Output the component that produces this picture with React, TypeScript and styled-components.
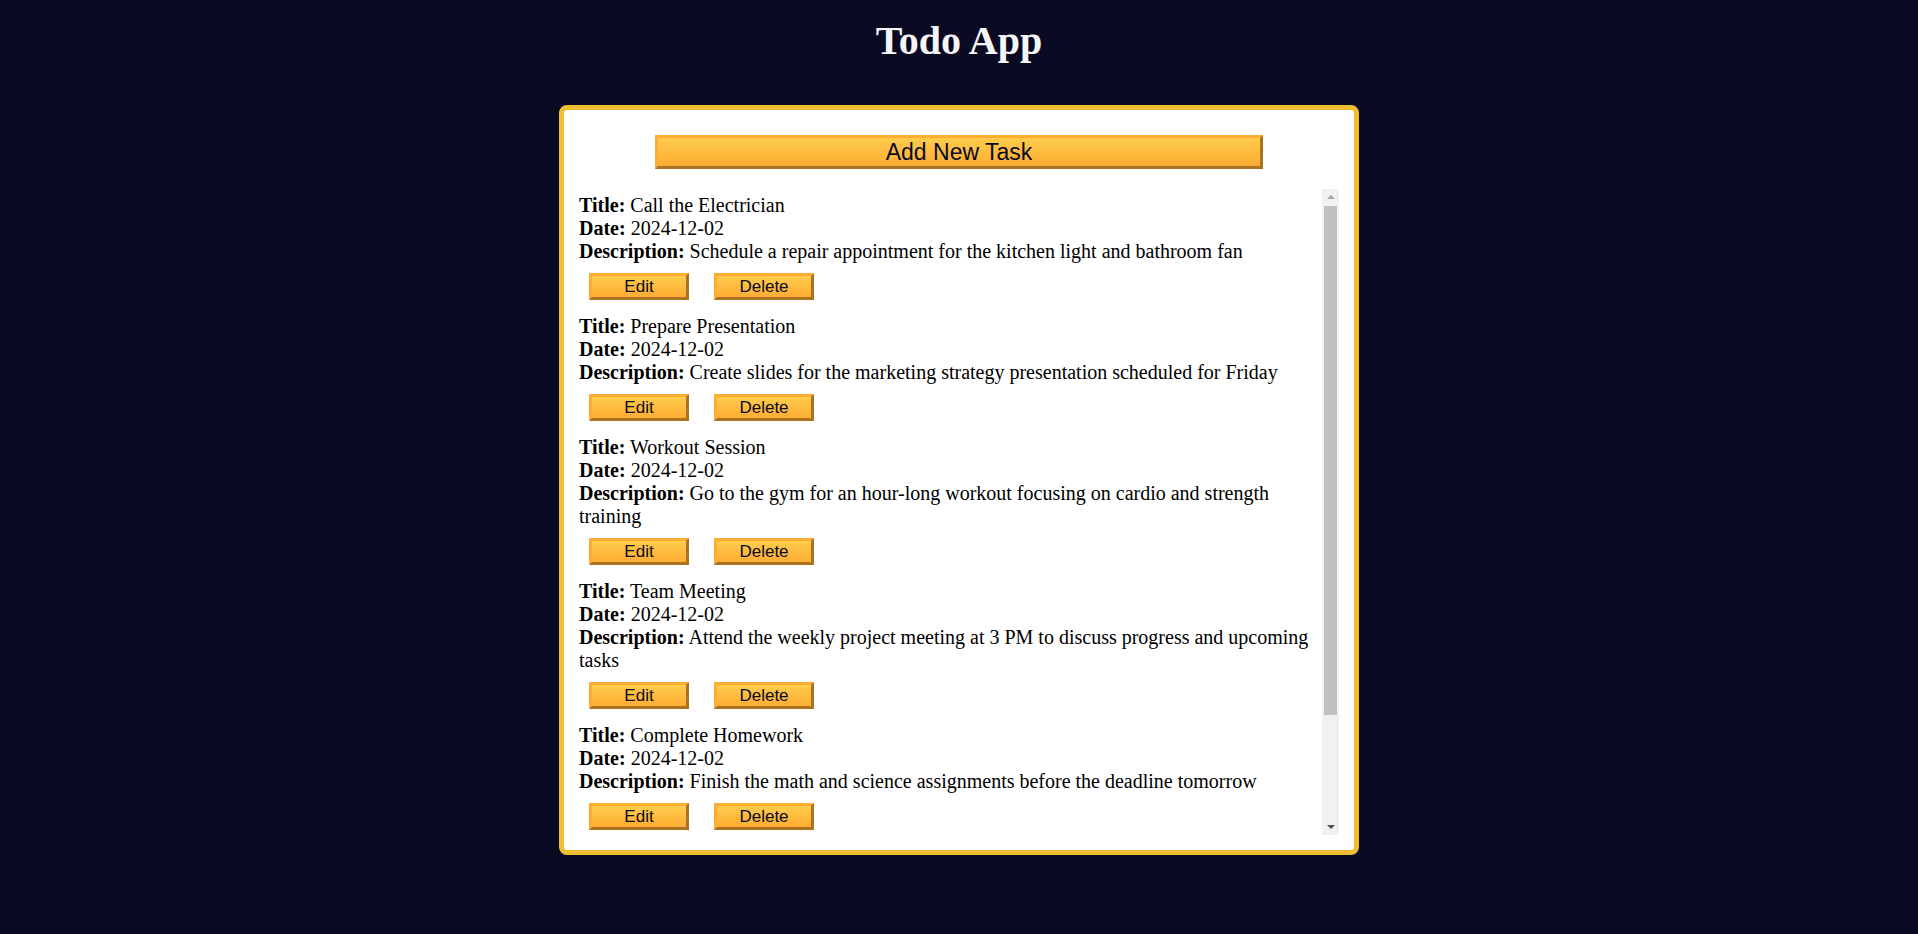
import React, { useCallback, useLayoutEffect, useRef, useState } from "react";
import styled, { createGlobalStyle } from "styled-components";

const GlobalStyle = createGlobalStyle`
  *, *::before, *::after {
    margin: 0;
    padding: 0;
    box-sizing: border-box;
  }
  html, body {
    background-color: #0a0a23;
  }
  body {
    font-family: "Liberation Serif", "Times New Roman", serif;
  }
`;

const Main = styled.main`
  display: flex;
  flex-direction: column;
  align-items: center;
`;

const Heading = styled.h1`
  color: #f5f6f7;
  font-family: "Liberation Serif", "Times New Roman", serif;
  font-size: 40px;
  font-weight: bold;
  line-height: 46px;
  margin: 18px 0 41px 0;
`;

const Card = styled.div`
  background-color: #fff;
  width: 800px;
  height: 750px;
  border: 5px solid #f1be32;
  border-radius: 8px;
  padding: 15px;
  display: flex;
  flex-direction: column;
`;

const Btn = styled.button<{ $large?: boolean }>`
  cursor: pointer;
  width: ${(p) => (p.$large ? "80%" : "100px")};
  height: ${(p) => (p.$large ? "34px" : "27px")};
  font-family: "Liberation Sans", Arial, sans-serif;
  font-size: ${(p) => (p.$large ? "23px" : "17px")};
  color: #0a0a23;
  background-color: #feac32;
  background-image: linear-gradient(#fecc4c, #ffac33);
  border: 3px outset #feac32;
  padding: 0;
  line-height: 1;
  align-self: ${(p) => (p.$large ? "center" : "auto")};
  margin: ${(p) => (p.$large ? "10px 0 20px" : "0")};
  flex-shrink: 0;
`;

const ListArea = styled.div`
  flex: 1;
  min-height: 0;
  display: flex;
`;

const TaskList = styled.div`
  flex: 1;
  min-width: 0;
  overflow-y: auto;
  scrollbar-width: none;
  display: flex;
  flex-direction: column;
  gap: 5px;
  padding: 5px 0;

  &::-webkit-scrollbar {
    display: none;
  }
`;

const ScrollBar = styled.div`
  width: 17px;
  flex-shrink: 0;
  display: flex;
  flex-direction: column;
  background: #f1f1f1;
`;

const ArrowButton = styled.div<{ $dir: "up" | "down"; $disabled?: boolean }>`
  height: 17px;
  flex-shrink: 0;
  display: flex;
  align-items: center;
  justify-content: center;

  &::after {
    content: "";
    width: 0;
    height: 0;
    border-left: 4px solid transparent;
    border-right: 4px solid transparent;
    ${(p) =>
      p.$dir === "up"
        ? `border-bottom: 4px solid ${p.$disabled ? "#a3a3a3" : "#505050"}; margin-top: -1px;`
        : `border-top: 4px solid ${p.$disabled ? "#a3a3a3" : "#505050"}; margin-top: 1px;`}
  }
`;

const Track = styled.div`
  flex: 1;
  min-height: 0;
  position: relative;
`;

const Thumb = styled.div`
  position: absolute;
  left: 2px;
  right: 2px;
  background: #c1c1c1;
`;

const Task = styled.div`
  font-family: "Liberation Serif", "Times New Roman", serif;
  font-size: 20px;
  color: #000;
  flex-shrink: 0;
`;

const Line = styled.p`
  line-height: 23px;
`;

const Label = styled.strong`
  font-weight: bold;
`;

const ButtonRow = styled.div`
  display: flex;
  gap: 25px;
  padding: 10px;
`;

type TaskData = { title: string; date: string; description: string };

const tasks: TaskData[] = [
  {
    title: "Call the Electrician",
    date: "2024-12-02",
    description:
      "Schedule a repair appointment for the kitchen light and bathroom fan",
  },
  {
    title: "Prepare Presentation",
    date: "2024-12-02",
    description:
      "Create slides for the marketing strategy presentation scheduled for Friday",
  },
  {
    title: "Workout Session",
    date: "2024-12-02",
    description:
      "Go to the gym for an hour-long workout focusing on cardio and strength training",
  },
  {
    title: "Team Meeting",
    date: "2024-12-02",
    description:
      "Attend the weekly project meeting at 3 PM to discuss progress and upcoming tasks",
  },
  {
    title: "Complete Homework",
    date: "2024-12-02",
    description:
      "Finish the math and science assignments before the deadline tomorrow",
  },
  {
    title: "Grocery Shopping",
    date: "2024-12-02",
    description: "Buy vegetables, fruits, and milk for the week",
  },
];

export default function App() {
  const listRef = useRef<HTMLDivElement>(null);
  const trackRef = useRef<HTMLDivElement>(null);
  const [thumb, setThumb] = useState({ top: 0, height: 509 });

  const update = useCallback(() => {
    const list = listRef.current;
    const track = trackRef.current;
    if (!list || !track) return;
    const trackH = track.clientHeight;
    const ratio = list.clientHeight / Math.max(list.scrollHeight, 1);
    const height = Math.min(trackH, Math.max(20, Math.round(trackH * ratio)));
    const maxScroll = list.scrollHeight - list.clientHeight;
    const top =
      maxScroll > 0 ? Math.round((list.scrollTop / maxScroll) * (trackH - height)) : 0;
    setThumb({ top, height });
  }, []);

  useLayoutEffect(() => {
    update();
  }, [update]);

  return (
    <>
      <GlobalStyle />
      <Main>
        <Heading>Todo App</Heading>
        <Card>
          <Btn $large type="button">
            Add New Task
          </Btn>
          <ListArea>
            <TaskList ref={listRef} onScroll={update}>
              {tasks.map((t, i) => (
                <Task key={i}>
                  <Line>
                    <Label>Title:</Label> {t.title}
                  </Line>
                  <Line>
                    <Label>Date:</Label> {t.date}
                  </Line>
                  <Line>
                    <Label>Description:</Label> {t.description}
                  </Line>
                  <ButtonRow>
                    <Btn type="button">Edit</Btn>
                    <Btn type="button">Delete</Btn>
                  </ButtonRow>
                </Task>
              ))}
            </TaskList>
            <ScrollBar aria-hidden="true">
              <ArrowButton $dir="up" $disabled={thumb.top === 0} />
              <Track ref={trackRef}>
                <Thumb style={{ top: thumb.top, height: thumb.height }} />
              </Track>
              <ArrowButton $dir="down" />
            </ScrollBar>
          </ListArea>
        </Card>
      </Main>
    </>
  );
}
